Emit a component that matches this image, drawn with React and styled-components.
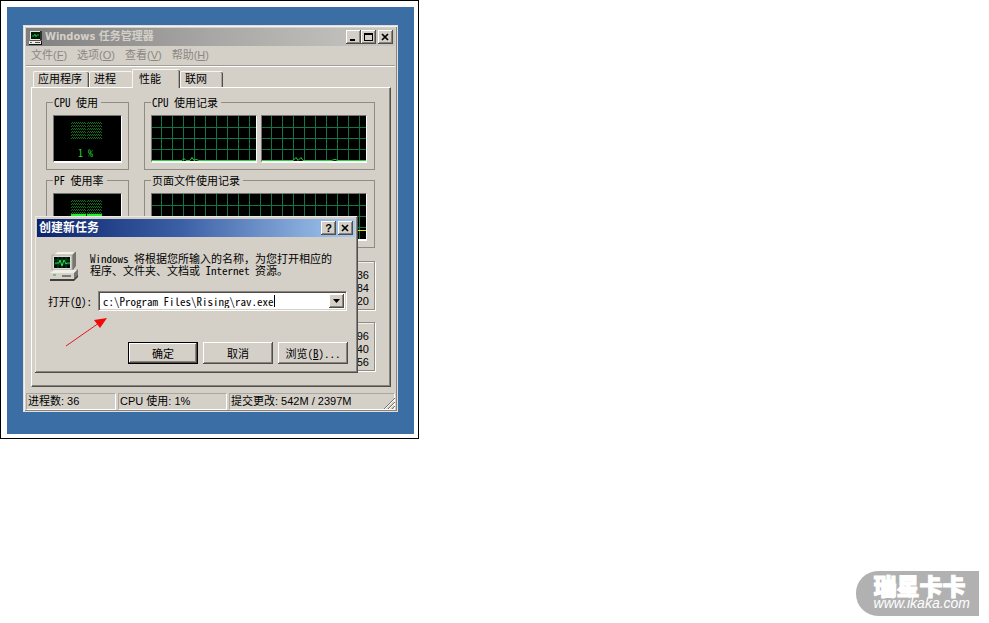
import React from "react";
import styled, { createGlobalStyle, css } from "styled-components";

const face = "#d4d0c8";
const shade = "#87847e";
const dark = "#504e4a";
const ui = `"Liberation Sans", "Noto Sans CJK SC", sans-serif`;
const mono = `"Noto Sans Mono CJK SC", "Liberation Mono", "Noto Sans CJK SC", monospace`;

const GlobalStyle = createGlobalStyle`
  * { box-sizing: border-box; }
  body { margin: 0; background: #fff; color: #000; font: 11px/13px ${ui}; }
  button, input { font: inherit; color: inherit; }
`;

const raised = css`
  background: ${face};
  box-shadow: inset -1px -1px ${dark}, inset 1px 1px #fff, inset -2px -2px ${shade};
`;

const Page = styled.main`
  min-height: 100vh;
  display: flex;
  flex-direction: column;
  align-items: flex-start;
`;

const Figure = styled.figure`
  margin: 0;
  width: 100%;
  max-width: 419px;
  border: 1px solid #000;
  padding: 6px 4px 4px 6px;
`;

const Desktop = styled.div`
  background: #3a6ea5;
  padding: 18px 16px 22px;
`;

const Window = styled.section`
  position: relative;
  padding: 3px 3px 2px;
  background: ${face};
  box-shadow: inset 0 0 0 1px #e2dfd9, inset -1px -1px ${dark}, inset 2px 2px #f4f2ee, inset -2px -2px ${shade};
`;

const TitleBar = styled.header`
  display: flex;
  align-items: center;
  height: 18px;
  padding: 0 2px;
  gap: 2px;
  color: ${(p) => (p.$active ? "#fff" : face)};
  background: ${(p) =>
    p.$active
      ? "linear-gradient(90deg, #0b246b, #3b5fa6 45%, #a6caf0)"
      : "linear-gradient(90deg, #7f7f7f, #a8a7a5 50%, #c9c7c2)"};
`;

const Title = styled.h1`
  flex: 1;
  margin: 0;
  font: 700 11px/16px "DejaVu Sans Condensed", ${ui};
`;

const DialogTitle = styled.h2`
  flex: 1;
  margin: 0;
  font: 700 12px/16px ${ui};
`;

const Buttons = styled.div`
  display: flex;
`;

const CaptionButton = styled.button`
  ${raised}
  width: 15px;
  height: 14px;
  border: 0;
  padding: 0;
  display: grid;
  place-items: center;
  color: #000;
  margin-left: ${(p) => (p.$apart ? "2px" : 0)};
`;

const MenuBar = styled.nav`
  display: flex;
  gap: 10px;
  height: 20px;
  padding: 2px 6px 0 5px;
  border-bottom: 1px solid #a09d97;
  box-shadow: 0 1px #fff;
`;

const MenuItem = styled.button`
  border: 0;
  padding: 0;
  background: none;
  height: 14px;
  line-height: 14px;
  color: #8b8882;
`;

const Body = styled.div`
  padding: 3px 4px 6px 5px;
`;

const Tabs = styled.div`
  display: flex;
  align-items: flex-end;
  padding-left: 2px;
`;

const Tab = styled.button`
  height: ${(p) => (p.$on ? 19 : 16)}px;
  width: ${(p) => p.$w}px;
  margin-bottom: ${(p) => (p.$on ? "-1px" : 0)};
  padding: 0 0 0 ${(p) => (p.$on ? 6 : 4)}px;
  position: relative;
  text-align: left;
  white-space: nowrap;
  line-height: 15px;
  background: ${face};
  border: solid #f8f6f2;
  border-width: 1px 0 0 1px;
  border-radius: 2px 2px 0 0;
  box-shadow: ${(p) => (p.$edge ? `inset -1px 0 ${dark}, inset -2px 0 #a8a5a0` : "none")};
`;

const Panel = styled.div`
  display: grid;
  grid-template-columns: 83px 1fr;
  column-gap: 15px;
  padding: 8px 15px 15px 14px;
  border: 1px solid #fff;
  border-right-color: ${dark};
  border-bottom-color: ${dark};
  box-shadow: inset -1px -1px ${shade};
`;

const Group = styled.fieldset`
  min-width: 0;
  margin: 0 0 4px;
  padding: 6px ${(p) => (p.$wide ? 7 : 6)}px 6px 6px;
  border: 1px solid #8f8c86;
`;

const Legend = styled.legend`
  font: 11px/13px ${mono};
  padding: 0 3px 0 1px;
`;

const Graphs = styled.div`
  display: grid;
  grid-auto-flow: column;
  grid-auto-columns: 1fr;
  gap: 4px;
`;

const Screen = styled.div`
  height: 48px;
  background: #000;
  border: 1px solid #77746f;
  border-right-color: #fff;
  border-bottom: 2px solid #fff;
  overflow: hidden;
`;

const Plot = styled.svg`
  display: block;
  width: 100%;
  height: 100%;
`;

const Gauge = styled(Screen)`
  display: flex;
  flex-direction: column;
  padding: 6px 0 0 17px;
  color: #25dc35;
  font: 10px/12px ${mono};
`;

const Lamps = styled.svg`
  flex: none;
  margin-bottom: 5px;
`;

const Reading = styled.span`
  padding-left: 7px;
`;

const Totals = styled.ul`
  grid-column: 2;
  list-style: none;
  margin: ${(p) => (p.$first ? 9 : 12)}px 0 0;
  padding: 7px 5px 1px;
  border: 1px solid #8f8c86;
  box-shadow: 1px 1px #fff, inset 1px 1px #f2f0ec;
  text-align: right;
`;

const StatusBar = styled.footer`
  display: grid;
  grid-template-columns: 90px 109px 1fr;
  gap: 2px;
  position: relative;
`;

const Status = styled.span`
  height: 17px;
  padding-left: 1px;
  line-height: 15px;
  white-space: nowrap;
  border: 1px solid #aaa7a1;
  border-right-color: #fff;
  border-bottom-color: #fff;
`;

const Grip = styled.svg`
  position: absolute;
  right: 0;
  bottom: 1px;
`;

const Dialog = styled.section`
  position: absolute;
  left: 12px;
  top: 191px;
  width: 323px;
  padding: 3px 3px 9px 2px;
  background: ${face};
  box-shadow: inset -1px -1px ${dark}, inset 1px 1px #ece9e4, inset -2px -2px ${shade};
`;

const Intro = styled.div`
  display: flex;
  gap: 11px;
  padding: 14px 0 0 12px;
`;

const Message = styled.p`
  margin: 1px 0 0;
  font: 11px/12px ${mono};
  white-space: nowrap;
`;

const Field = styled.div`
  display: flex;
  align-items: center;
  margin: 10px 8px 0 11px;
  font: 11px/13px ${mono};
`;

const FieldLabel = styled.label`
  width: 50px;
  white-space: nowrap;
`;

const Combo = styled.div`
  flex: 1;
  display: flex;
  align-items: center;
  height: 20px;
  background: #fff;
  padding: 2px 2px 2px 4px;
  border: 1px solid ${shade};
  border-right-color: #fff;
  border-bottom-color: #fff;
  box-shadow: inset 1px 1px ${dark}, inset -1px -1px ${face};
`;

const Path = styled.input`
  field-sizing: content;
  border: 0;
  padding: 0;
  outline: 0;
  background: none;
  height: 14px;
`;

const Caret = styled.span`
  width: 1px;
  height: 12px;
  background: #000;
`;

const Drop = styled(CaptionButton)`
  margin-left: auto;
`;

const Actions = styled.div`
  display: flex;
  justify-content: flex-end;
  gap: 5px;
  padding: 31px 7px 0 0;
`;

const Action = styled.button`
  ${raised}
  width: 70px;
  height: 22px;
  padding: 0;
  font: 11px/14px ${mono};
  border: ${(p) => (p.$main ? "1px solid #000" : "0")};
`;

const Arrow = styled.svg`
  position: absolute;
  left: 30px;
  top: 101px;
`;

const Badge = styled.a`
  margin: auto 10px 7px 0;
  align-self: flex-end;
  height: 45px;
  padding: 4px 9px 0 18px;
  border-radius: 22px 0 0 22px;
  background: #b1b1b1;
  color: #fff;
  text-decoration: none;
  font: italic 14px/14px "Liberation Sans", sans-serif;
`;

const Brand = styled.strong`
  display: block;
  font: 900 23px/21px "Noto Sans CJK SC", sans-serif;
  -webkit-text-stroke: 1px #fff;
`;

function Computer() {
  return (
    <svg width="30" height="30" viewBox="0 0 30 30" aria-hidden="true">
      <path d="M4 4 8 1h19v14l-3 4H4z" fill="#77756f" />
      <path d="M4 4 8 1h18l-3 3z" fill="#f4f2ec" />
      <path d="M3 4h20v15H3z" fill="#dedbd2" stroke="#aaa79e" />
      <path d="M5 6h16v11H5z" fill="#001008" />
      <path d="M5 9h16M5 13h16M9 6v11M13 6v11M17 6v11" stroke="#064a25" fill="none" />
      <path d="M6 12h4l1-3 2 6 2-6 2 4 1-1h3" stroke="#27df4c" fill="none" />
      <path d="m1 22 4-3h23l-2 3z" fill="#f0ede6" />
      <path d="m25 22 4-4v7l-4 4z" fill="#77756f" />
      <path d="M1 22h24v6H1z" fill="#d5d2c9" />
      <path d="M1 28h24l4-4v2l-4 4H1z" fill="#403f3c" />
      <path d="M4 24h3" stroke="#21a747" />
      <path d="M13 25h9" stroke="#252525" />
    </svg>
  );
}

function SmallComputer() {
  return (
    <svg width="15" height="15" viewBox="0 0 15 15" aria-hidden="true">
      <path d="M2 1h11v10H2z" fill="#e6e3dc" />
      <path d="M12 1h2v9l-2 1z" fill="#33312e" />
      <path d="M3 2h9v7H3z" fill="#001a08" />
      <path d="M4 6h2l1-2 1 3 1-2h2" stroke="#22a33f" fill="none" />
      <path d="M1 11h12v3H1z" fill="#eeebe4" />
      <path d="M13 11h1v4H1v-1h12z" fill="#111" />
      <path d="M2 10.500h11M7 12.500h5" stroke="#55524d" />
      <path d="M2 12.500h2" stroke="#189235" />
    </svg>
  );
}

function Cross() {
  return (
    <svg width="9" height="8" viewBox="0 0 9 8" aria-hidden="true">
      <path d="m1 1 6 6M7 1 1 7" stroke="#000" strokeWidth="1.7" />
    </svg>
  );
}

function History({ id, trace, yellow }) {
  return (
    <Screen>
      <Plot aria-hidden="true">
        <defs>
          <pattern id={id} x="9" y="0" width="11" height="34" patternUnits="userSpaceOnUse">
            <path d="M.5 0v34M0 11.500h11M0 22.500h11M0 33.500h11" stroke="#137448" fill="none" />
          </pattern>
        </defs>
        <rect width="100%" height="100%" fill={`url(#${id})`} />
        {trace && <path d={trace} stroke="#20d936" fill="none" />}
        {yellow && <rect y="36" width="100%" height="1" fill="#d9e600" />}
      </Plot>
    </Screen>
  );
}

function Leds({ lit }) {
  const rows = [0, 3, 6, 9, 12, 15];
  return (
    <Lamps width="32" height="20" aria-hidden="true">
      {rows.map((y) => (
        <g key={y} fill="none" stroke="#0b7414" strokeDasharray="1 1">
          <path d={`M1 ${y + 0.5}h14M17 ${y + 0.5}h14`} />
          <path d={`M0 ${y + 1.5}h15M16 ${y + 1.5}h15`} />
        </g>
      ))}
      {lit && <path d="M0 14h15v6H0zM16 14h15v6H16z" fill="#20ed2c" />}
    </Lamps>
  );
}

const menus = [["文件", "F"], ["选项", "O"], ["查看", "V"], ["帮助", "H"]];

export default function App() {
  return (
    <>
      <GlobalStyle />
      <Page>
        <Figure>
          <Desktop>
            <Window>
              <TitleBar>
                <SmallComputer />
                <Title>Windows 任务管理器</Title>
                <Buttons>
                  <CaptionButton aria-label="最小化">
                    <svg width="9" height="8"><path d="M1 6h5v2H1z" /></svg>
                  </CaptionButton>
                  <CaptionButton aria-label="最大化">
                    <svg width="9" height="8"><path d="M0 0h9v8H0zM1 2v5h7V2z" fillRule="evenodd" /></svg>
                  </CaptionButton>
                  <CaptionButton aria-label="关闭" $apart><Cross /></CaptionButton>
                </Buttons>
              </TitleBar>
              <MenuBar>
                {menus.map(([name, key]) => (
                  <MenuItem key={key}>{name}(<u>{key}</u>)</MenuItem>
                ))}
              </MenuBar>
              <Body>
                <Tabs role="tablist">
                  <Tab role="tab" $w={56} $edge>应用程序</Tab>
                  <Tab role="tab" $w={43}>进程</Tab>
                  <Tab role="tab" $w={48} $on $edge aria-selected="true">性能</Tab>
                  <Tab role="tab" $w={43} $edge>联网</Tab>
                </Tabs>
                <Panel role="tabpanel">
                  <Group>
                    <Legend>CPU 使用</Legend>
                    <Gauge><Leds /><Reading>1 %</Reading></Gauge>
                  </Group>
                  <Group $wide>
                    <Legend>CPU 使用记录</Legend>
                    <Graphs>
                      <History id="cpu0" trace="M0 44.5h30l2-2 2 2h4l2-3 2 3 2-1 3 1h57" />
                      <History id="cpu1" trace="M0 44.5h31l3-3 2 3 3-3 2 3h28l4-1 3 1h28" />
                    </Graphs>
                  </Group>
                  <Group>
                    <Legend>PF 使用率</Legend>
                    <Gauge><Leds lit /></Gauge>
                  </Group>
                  <Group $wide>
                    <Legend>页面文件使用记录</Legend>
                    <History id="pf" yellow />
                  </Group>
                  <Totals $first><li>36</li><li>84</li><li>20</li></Totals>
                  <Totals><li>96</li><li>40</li><li>56</li></Totals>
                </Panel>
              </Body>
              <StatusBar>
                <Status>进程数: 36</Status>
                <Status>CPU 使用: 1%</Status>
                <Status>提交更改: 542M / 2397M</Status>
                <Grip width="12" height="12" aria-hidden="true">
                  <path d="M1 12 12 1M5 12l7-7M9 12l3-3" stroke="#77746e" />
                  <path d="M2 12 12 2M6 12l6-6" stroke="#fff" />
                </Grip>
              </StatusBar>

              <Dialog role="dialog" aria-label="创建新任务">
                <TitleBar $active>
                  <DialogTitle>创建新任务</DialogTitle>
                  <Buttons>
                    <CaptionButton aria-label="帮助"><b>?</b></CaptionButton>
                    <CaptionButton aria-label="关闭" $apart><Cross /></CaptionButton>
                  </Buttons>
                </TitleBar>
                <Intro>
                  <Computer />
                  <Message>
                    Windows 将根据您所输入的名称，为您打开相应的<br />
                    程序、文件夹、文档或 Internet 资源。
                  </Message>
                </Intro>
                <Field>
                  <FieldLabel htmlFor="path">打开(<u>O</u>):</FieldLabel>
                  <Combo>
                    <Path id="path" defaultValue="c:\Program Files\Rising\rav.exe" />
                    <Caret />
                    <Drop aria-label="展开列表">
                      <svg width="7" height="4"><path d="M0 0h7L3.500 4z" /></svg>
                    </Drop>
                  </Combo>
                </Field>
                <Actions>
                  <Action $main>确定</Action>
                  <Action>取消</Action>
                  <Action>浏览(<u>B</u>)...</Action>
                </Actions>
                <Arrow width="42" height="30" aria-hidden="true">
                  <path d="M1 29 34 6" stroke="#e01b1b" />
                  <path d="m42 1-7 10-6-8z" fill="#f20a0a" />
                </Arrow>
              </Dialog>
            </Window>
          </Desktop>
        </Figure>
        <Badge href="#">
          <Brand>瑞星卡卡</Brand>
          www.ikaka.com
        </Badge>
      </Page>
    </>
  );
}
